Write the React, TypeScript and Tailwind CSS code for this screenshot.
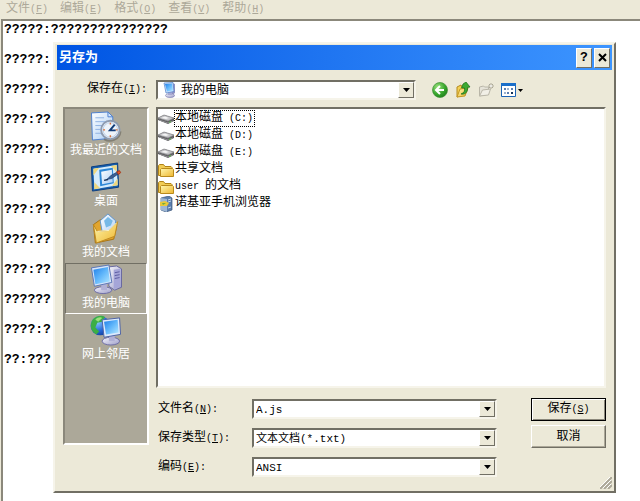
import { useState } from "react";
import type { ReactNode } from "react";

const NOTE_LINES = [
  "?????:???????????????",
  "?????:",
  "?????:",
  "???:??",
  "?????:",
  "???:??",
  "???:??",
  "???:??",
  "???:??",
  "??????",
  "????:?",
  "??:???",
];

const MENUS = [
  { text: "文件", hotkey: "F" },
  { text: "编辑", hotkey: "E" },
  { text: "格式", hotkey: "O" },
  { text: "查看", hotkey: "V" },
  { text: "帮助", hotkey: "H" },
];

/* ------------------- Small text helpers ------------------- */
function Latin({ children }: { children: ReactNode }) {
  return <span className="text-[10px]">{children}</span>;
}

function Hotkey({ letter, colon = false }: { letter: string; colon?: boolean }) {
  return (
    <Latin>
      (<u className="underline-offset-1">{letter}</u>){colon ? ":" : ""}
    </Latin>
  );
}

/* ------------------- Icons ------------------- */
function Gradients() {
  return (
    <svg width="0" height="0" className="absolute" aria-hidden>
      <defs>
        <linearGradient id="screen" x1="0" y1="0" x2="1" y2="1">
          <stop offset="0" stopColor="#1f7fe8" />
          <stop offset=".5" stopColor="#63b8fb" />
          <stop offset="1" stopColor="#b5e8ff" />
        </linearGradient>
        <linearGradient id="silver" x1="0" y1="0" x2="1" y2="1">
          <stop offset="0" stopColor="#f4f4fc" />
          <stop offset="1" stopColor="#9d9dc8" />
        </linearGradient>
        <linearGradient id="folder" x1="0" y1="0" x2="1" y2="1">
          <stop offset="0" stopColor="#fff8b0" />
          <stop offset="1" stopColor="#eeb62f" />
        </linearGradient>
        <linearGradient id="paper" x1="0" y1="0" x2="1" y2="1">
          <stop offset="0" stopColor="#ffffff" />
          <stop offset="1" stopColor="#a9cdf5" />
        </linearGradient>
        <radialGradient id="globe" cx=".35" cy=".3" r=".8">
          <stop offset="0" stopColor="#8fd0ff" />
          <stop offset=".6" stopColor="#2468d8" />
          <stop offset="1" stopColor="#123a94" />
        </radialGradient>
        <radialGradient id="green" cx=".35" cy=".3" r=".8">
          <stop offset="0" stopColor="#9be27e" />
          <stop offset=".6" stopColor="#37a52c" />
          <stop offset="1" stopColor="#1c7a1a" />
        </radialGradient>
      </defs>
    </svg>
  );
}

function RecentIcon() {
  return (
    <svg width="32" height="32" viewBox="0 0 32 32" aria-hidden>
      <path d="M1 2l17-1 5 5v22l-21 2z" fill="url(#paper)" stroke="#4b7fd0" />
      <path d="M18 1v5h5z" fill="#d7e8fb" stroke="#4b7fd0" />
      <path d="M5 7h9M5 11h12M5 15h7M5 19h5M5 23h6" stroke="#8fb2e2" />
      <path d="M14 29c6 4 16 1 17-8" stroke="#59574f" strokeWidth="2" fill="none" opacity=".5" />
      <circle cx="20.500" cy="19.500" r="9.500" fill="#eef4fb" stroke="#8e9bb0" strokeWidth="2" />
      <circle cx="20.500" cy="19.500" r="7.500" fill="none" stroke="#b9cde6" />
      <path d="M20.500 12v2M20.500 25v2M13 19.500h2M26 19.500h2" stroke="#d8703a" strokeWidth="1.500" />
      <path d="M25 14l-5 6h6" stroke="#123c78" strokeWidth="2" fill="none" />
    </svg>
  );
}

function DesktopIcon() {
  return (
    <svg width="32" height="32" viewBox="0 0 32 32" aria-hidden>
      <path d="M1 5l27-4 1 25-27 4z" fill="#155fae" stroke="#0c3e80" />
      <path d="M3 7l24-4 1 21-24 4z" fill="#d5ecfc" />
      <path d="M3 7l6-1-6 8zM28 24l-6 1 6-8zM27 3v7l-6-6zM4 28v-7l6 6z" fill="#efd77c" />
      <path d="M9 8l14-2 1 16-14 3z" fill="#2d87d6" />
      <path d="M11 10l11-2 1 13-11 2z" fill="url(#paper)" />
      <path d="M17 18l4-4 7-4 1 2-7 5z" fill="#3c5f92" stroke="#173d72" strokeWidth=".7" />
      <path d="M27 10l3-1 1 2-2 2z" fill="#e6552b" stroke="#a53514" />
      <path d="M14 19l4-1" stroke="#132e55" strokeWidth="1.500" />
    </svg>
  );
}

function DocumentsIcon() {
  return (
    <svg width="32" height="32" viewBox="0 0 32 32" aria-hidden>
      <path d="M3 12l7-5 4 2 9 2 4 3-3 13-19 4z" fill="#e2a52e" stroke="#a77414" />
      <path d="M10 8l8-7 8 7-1 12-12 5z" fill="url(#paper)" stroke="#5f95cb" />
      <path d="M14 8l4-4 5 4-2 5-5 2z" fill="#76b9e7" />
      <path d="M3 12l4 7 12-1 9-9-3 15-19 7z" fill="url(#folder)" stroke="#bd8820" />
      <path d="M7 19l12-1 8-8" stroke="#fffbd0" fill="none" />
    </svg>
  );
}

function ComputerIcon() {
  return (
    <svg width="32" height="32" viewBox="0 0 32 32" aria-hidden>
      <path d="M19 3l8-1 5 3v19l-7 3-6-4z" fill="url(#silver)" stroke="#6767a0" />
      <path d="M24 6l7-1v18l-7 3z" fill="#a5a5d8" />
      <path d="M25 9l5-1M25 12l5-1M25 15l5-1" stroke="#5c5ca0" />
      <ellipse cx="13" cy="27" rx="9" ry="3.500" fill="url(#silver)" stroke="#6d6da5" />
      <path d="M11 20h6v7h-6z" fill="#b0b0d5" />
      <path d="M1 4l18-3 3 18-18 4z" fill="#d7e6fb" stroke="#5b76b6" />
      <path d="M3 6l15-3 2 15-15 3z" fill="url(#screen)" />
    </svg>
  );
}

function NetworkIcon() {
  return (
    <svg width="34" height="32" viewBox="0 0 34 32" aria-hidden>
      <circle cx="11" cy="11" r="10" fill="url(#globe)" />
      <path d="M3 5c4-5 10-5 13-3l-3 5-5 1-2 5 4 4-3 3C1 17 0 10 3 5z" fill="#3cae45" />
      <path d="M6 5c2-3 6-3 7-2l-4 4z" fill="#9be07c" />
      <ellipse cx="22" cy="27" rx="9" ry="4" fill="url(#silver)" stroke="#6d6da5" />
      <path d="M20 20h6v7h-6z" fill="#b0b0d5" />
      <path d="M13 5l18-2 1 17-17 3z" fill="#dceafd" stroke="#4c62a4" />
      <path d="M15 7l14-2 1 13-13 2z" fill="url(#screen)" />
    </svg>
  );
}

function SmallComputerIcon() {
  return (
    <svg width="16" height="16" viewBox="0 0 16 16" className="shrink-0" aria-hidden>
      <path d="M10 1l3 1v9l-3 2z" fill="#9292c3" />
      <ellipse cx="8" cy="13.500" rx="4.500" ry="2" fill="url(#silver)" stroke="#7474a8" strokeWidth=".6" />
      <path d="M6 9h4v4H6z" fill="#a9a9d2" />
      <path d="M2 1l9-.5 1 9L4 11z" fill="#cbdffb" stroke="#4d7fc9" strokeWidth=".7" />
      <path d="M3 2l7-.5 1 7-6 1z" fill="url(#screen)" />
    </svg>
  );
}

function DriveIcon() {
  return (
    <svg width="16" height="16" viewBox="0 0 16 16" className="shrink-0" aria-hidden>
      <path d="M0 7l6-3 10 3v3l-6 3-10-4z" fill="#5e5e61" />
      <path d="M0 7l6-3 10 3-6 3z" fill="#c4c4c7" stroke="#8a8a8c" strokeWidth=".7" />
      <path d="M3 7l4-1.500 4 1.500-3 1z" fill="#f4f4f4" />
      <path d="M1 9l9 3 5-2" fill="none" stroke="#8f8f92" />
      <path d="M11 11.500l2-1" stroke="#58b74a" />
    </svg>
  );
}

function FolderIcon() {
  return (
    <svg width="16" height="16" viewBox="0 0 16 16" className="shrink-0" aria-hidden>
      <path d="M.5 13.500v-10l1-1h4l1.500 2h6l1 1v8z" fill="#f1cc55" stroke="#b08318" />
      <path d="M2.500 14.500v-7l1-1h11l1 1v7z" fill="url(#folder)" stroke="#b98a1c" />
    </svg>
  );
}

function PhoneIcon() {
  return (
    <svg width="16" height="16" viewBox="0 0 16 16" className="shrink-0" aria-hidden>
      <path d="M3 2l8-2 3 2v12l-6 2-5-2z" fill="#5b7fae" stroke="#3c5678" strokeWidth=".7" />
      <path d="M3 2l6 1v13l-6-2z" fill="#9db6d3" />
      <path d="M10 4l3-1M10 6l3-1M10 12l3-1" stroke="#c5d9ee" />
      <path d="M2 6l5-1 4 2-2 3-7 0z" fill="#e8c83a" />
      <path d="M4 7l4 0-3 2z" fill="#6fae3e" />
    </svg>
  );
}

function BackIcon() {
  return (
    <svg width="16" height="16" viewBox="0 0 16 16" aria-hidden>
      <circle cx="8" cy="8" r="7.500" fill="url(#green)" stroke="#3d8f35" strokeWidth=".7" />
      <path d="M8 4L4 8l4 4M4.500 8H12" stroke="#fff" strokeWidth="2" fill="none" />
    </svg>
  );
}

function UpIcon() {
  return (
    <svg width="16" height="16" viewBox="0 0 16 16" aria-hidden>
      <path d="M2 15V5l4-2 1 2h3v7z" fill="#f3d155" stroke="#b58a20" />
      <path d="M2 15l3-8 8-1-3 8z" fill="url(#folder)" stroke="#c49724" />
      <path d="M6 12c3-1 4-3 3.500-6H6.500L8 2l3-2 4 5-2.500.500C13 9 11 13 6 12z" fill="#3daa32" stroke="#176d16" strokeWidth=".7" />
    </svg>
  );
}

function NewFolderIcon() {
  return (
    <svg width="16" height="16" viewBox="0 0 16 16" aria-hidden>
      <path d="M1.500 14V5l4-1 1 1h4v7z" fill="#e5e3d8" stroke="#b9b6a8" />
      <path d="M1.500 14l3-6 8-1-2 6z" fill="#f1efe6" stroke="#b9b6a8" />
      <path d="M13 1v6M10 4h6M11 2l4 4M15 2l-4 4" stroke="#aaa798" />
      <circle cx="13" cy="4" r="1" fill="#fff" />
    </svg>
  );
}

function ViewsIcon() {
  return (
    <svg width="22" height="16" viewBox="0 0 22 16" aria-hidden>
      <path d="M.5 1.500h14v13H.5z" fill="#fff" stroke="#1b63b5" />
      <path d="M0 1h15v3H0z" fill="#1b6fc9" />
      <path d="M3 6h2v2H3zM10 6h2v2h-2zM6 10h2v2H6z" fill="#5b7fb0" />
      <path d="M6 6h2v2H6zM3 10h2v2H3z" fill="#9db3cf" />
      <path d="M10 10h2v2h-2z" fill="#16345c" />
      <path d="M17 7h5l-2.500 3z" fill="#000" />
    </svg>
  );
}

function ArrowBox() {
  return (
    <span className="pointer-events-none absolute inset-y-0 right-0 flex w-4 items-center justify-center border border-t-white border-l-white border-r-[#716f64] border-b-[#716f64] bg-[#ece9d8]">
      <svg width="7" height="4" viewBox="0 0 7 4" aria-hidden>
        <path d="M0 0h7L3.500 4z" />
      </svg>
    </span>
  );
}

/* ------------------- Dialog data ------------------- */
const PLACES = [
  { name: "我最近的文档", icon: <RecentIcon /> },
  { name: "桌面", icon: <DesktopIcon /> },
  { name: "我的文档", icon: <DocumentsIcon /> },
  { name: "我的电脑", icon: <ComputerIcon /> },
  { name: "网上邻居", icon: <NetworkIcon /> },
];

const ENTRIES = [
  { id: "c", icon: <DriveIcon />, label: <>本地磁盘<Latin> (C:)</Latin></> },
  { id: "d", icon: <DriveIcon />, label: <>本地磁盘<Latin> (D:)</Latin></> },
  { id: "e", icon: <DriveIcon />, label: <>本地磁盘<Latin> (E:)</Latin></> },
  { id: "shared", icon: <FolderIcon />, label: <>共享文档</> },
  { id: "user", icon: <FolderIcon />, label: <><Latin>user </Latin>的文档</> },
  { id: "phone", icon: <PhoneIcon />, label: <>诺基亚手机浏览器</> },
];

const SUNKEN =
  "border-2 border-t-[#716f64] border-l-[#716f64] border-r-[#f6f4ea] border-b-[#f6f4ea] bg-white";
const TITLE_BUTTON =
  "flex h-5 w-4 items-center justify-center border border-t-white border-l-white border-r-[#716f64] border-b-[#716f64] bg-[#ece9d8]";
const FIELD = "block h-4 w-full appearance-none bg-white pt-px pr-4 pl-0.5 text-[11px] leading-4 outline-none";

function SaveAsDialog() {
  const [place, setPlace] = useState("我的电脑");
  const [entry, setEntry] = useState("c");
  const [fileName, setFileName] = useState("A.js");

  return (
    <section
      role="dialog"
      aria-labelledby="dialog-title"
      className="absolute top-[42px] right-6 left-[53px] border-2 border-t-[#f6f4ea] border-l-[#f6f4ea] border-r-[#716f64] border-b-[#716f64] bg-[#ece9d8] px-0.5 pt-px pb-3.5"
    >
      {/* Title bar */}
      <header className="flex h-[25px] items-center gap-0.5 bg-linear-to-r from-[#0054e3] to-[#3d95ff] pr-0.5 pl-0.5">
        <h1 id="dialog-title" className="flex-1 text-[13px] font-bold text-white">
          另存为
        </h1>
        <button aria-label="帮助" className={TITLE_BUTTON}>
          <span className="text-[13px] font-bold">?</span>
        </button>
        <button aria-label="关闭" className={TITLE_BUTTON}>
          <svg width="9" height="9" viewBox="0 0 9 9" aria-hidden>
            <path d="M1 1l7 7M8 1L1 8" stroke="#000" strokeWidth="2" />
          </svg>
        </button>
      </header>

      <div className="grid grid-cols-[86px_1fr] gap-x-[7px] gap-y-[7px] px-1.5 pt-2.5">
        {/* Look-in row */}
        <label htmlFor="look-in" className="pr-0.5 text-right leading-[18px]">
          保存在<Hotkey letter="I" colon />
        </label>
        <div className="flex h-5 items-center">
          <div className={`relative w-[260px] ${SUNKEN}`}>
            <select id="look-in" className="block h-4 w-full appearance-none bg-white pt-px pr-4 pl-[23px] leading-4 outline-none">
              <option>我的电脑</option>
            </select>
            <span className="pointer-events-none absolute inset-y-0 left-1">
              <SmallComputerIcon />
            </span>
            <ArrowBox />
          </div>
          <div className="ml-4 flex gap-[7px]">
            <button aria-label="后退"><BackIcon /></button>
            <button aria-label="向上"><UpIcon /></button>
            <button aria-label="新建文件夹" disabled><NewFolderIcon /></button>
            <button aria-label="查看菜单"><ViewsIcon /></button>
          </div>
        </div>

        {/* Places bar */}
        <nav className="h-[338px] border-2 border-t-[#8b887b] border-l-[#8b887b] border-r-white border-b-white bg-[#aca899] pt-px">
          {PLACES.map((p) => (
            <button
              key={p.name}
              onClick={() => setPlace(p.name)}
              className={`flex h-[51px] w-full flex-col items-center border text-white ${
                p.name === place
                  ? "border-t-[#716f64] border-l-[#716f64] border-r-white border-b-white"
                  : "border-transparent"
              }`}
            >
              {p.icon}
              <span className="leading-[18px] whitespace-nowrap">{p.name}</span>
            </button>
          ))}
        </nav>

        <div>
          {/* File list */}
          <ul className={`h-[281px] pt-px ${SUNKEN}`}>
            {ENTRIES.map((e) => (
              <li key={e.id}>
                <button onClick={() => setEntry(e.id)} className="flex h-[17px] items-center">
                  {e.icon}
                  <span
                    className={`border border-dotted pr-px leading-[15px] whitespace-pre ${
                      e.id === entry ? "border-black" : "border-transparent"
                    }`}
                  >
                    {e.label}
                  </span>
                </button>
              </li>
            ))}
          </ul>

          {/* Name, type and encoding */}
          <form className="mt-2.5 flex items-start gap-[34px]" onSubmit={(e) => e.preventDefault()}>
            <div className="mt-px grid flex-1 grid-cols-[96px_1fr] items-center gap-y-[9px]">
              <label htmlFor="file-name" className="pl-0.5">
                文件名<Hotkey letter="N" colon />
              </label>
              <div className={`relative h-5 ${SUNKEN}`}>
                <input
                  id="file-name"
                  className={FIELD}
                  value={fileName}
                  onChange={(e) => setFileName(e.target.value)}
                />
                <ArrowBox />
              </div>
              <label htmlFor="file-type" className="pl-0.5">
                保存类型<Hotkey letter="T" colon />
              </label>
              <div className={`relative h-5 ${SUNKEN}`}>
                <select id="file-type" className={FIELD}>
                  <option>文本文档(*.txt)</option>
                </select>
                <ArrowBox />
              </div>
              <label htmlFor="encoding" className="pl-0.5">
                编码<Hotkey letter="E" colon />
              </label>
              <div className={`relative h-5 ${SUNKEN}`}>
                <select id="encoding" className={FIELD}>
                  <option>ANSI</option>
                </select>
                <ArrowBox />
              </div>
            </div>
            <div className="flex w-[75px] flex-col gap-1">
              <button type="submit" className="h-[23px] border border-black bg-[#ece9d8] shadow-[inset_1px_1px_#fff,inset_-1px_-1px_#8b887b]">
                保存<Hotkey letter="S" />
              </button>
              <button type="button" className="h-[23px] border border-t-white border-l-white border-r-[#716f64] border-b-[#716f64] bg-[#ece9d8] shadow-[inset_-1px_-1px_#aca899]">
                取消
              </button>
            </div>
          </form>
        </div>
      </div>

      {/* Resize grip */}
      <svg width="12" height="12" viewBox="0 0 12 12" className="absolute right-0.5 bottom-0.5" aria-hidden>
        <path d="M0 12L12 0M4 12l8-8M8 12l4-4" stroke="#aca899" strokeWidth="2" />
        <path d="M-1 11L11-1M3 11l8-8M7 11l4-4" stroke="#fff" />
      </svg>
    </section>
  );
}

export default function App() {
  return (
    <div className="relative flex min-h-screen flex-col bg-[#ece9d8] font-['Liberation_Mono','Noto_Sans_CJK_SC',monospace] text-[12px] leading-4 text-black">
      <Gradients />
      <nav className="flex h-[19px] gap-3 pl-1.5 text-[#aca899]">
        {MENUS.map((m) => (
          <button key={m.hotkey} className="whitespace-nowrap">
            {m.text}
            <Hotkey letter={m.hotkey} />
          </button>
        ))}
      </nav>
      <main className="ml-px flex-1 border-t-2 border-l-2 border-[#8b887b] bg-white">
        {NOTE_LINES.map((line, i) => (
          <p key={i} className="h-[30px] pl-px text-[13px] leading-[18px] font-bold">
            {line}
          </p>
        ))}
      </main>
      <SaveAsDialog />
    </div>
  );
}
